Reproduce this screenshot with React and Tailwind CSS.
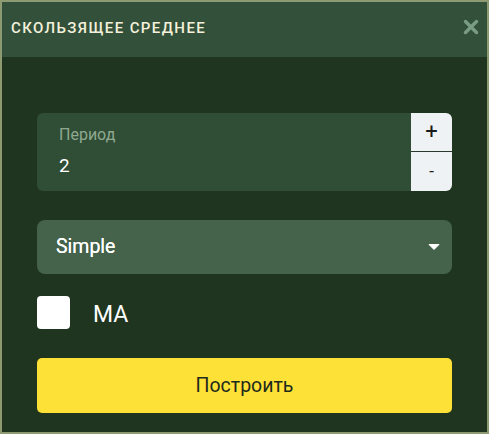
export default function App() {
  return (
    <div className="w-[489px] h-[434px] border-[2px] border-[#8d9a72] bg-[#1f3520] flex flex-col" style={{ fontFamily: "Roboto, 'Liberation Sans', sans-serif" }}>
      <div className="h-[55px] shrink-0 bg-[#33503a] flex items-center justify-between pl-[9px] pr-[8px]">
        <span className="text-[15px] font-medium tracking-[1.4px] text-[#f3f1dc] mt-[-2px]">СКОЛЬЗЯЩЕЕ СРЕДНЕЕ</span>
        <svg width="16" height="16" viewBox="0 0 16 16" className="mt-[-5px]">
          <path d="M2.5 2.5 L13.5 13.5 M13.5 2.5 L2.5 13.5" stroke="#7b9c84" strokeWidth="3.4" strokeLinecap="round" />
        </svg>
      </div>
      <div className="flex flex-col px-[35px] pt-[56px]">
        <div className="flex h-[78px]">
          <div className="flex-1 bg-[#304e35] rounded-l-[6px] flex flex-col pl-[22px] pt-[12px]">
            <span className="text-[16px] text-[#8fa890] leading-[20px]">Период</span>
            <span className="text-[19px] text-white leading-[22px] mt-[10px]">2</span>
          </div>
          <div className="w-[41px] flex flex-col">
            <button className="h-[39px] bg-[#eef2f4] rounded-tr-[6px] text-[22px] leading-none text-[#1a1a1a] flex items-center justify-center border-b border-[#2a3a2c]">+</button>
            <button className="flex-1 bg-[#eef2f4] rounded-br-[6px] text-[17px] leading-none text-[#1a1a1a] flex items-center justify-center">-</button>
          </div>
        </div>
        <div className="mt-[29px] h-[54px] bg-[#44634a] rounded-[8px] flex items-center justify-between pl-[19px] pr-[12px]">
          <span className="text-[19.5px] text-white [text-shadow:0_0_0.4px_#fff]">Simple</span>
          <svg width="12" height="8" viewBox="0 0 12 8">
            <path d="M1 1.5 L11 1.5 L6 6.5 Z" fill="#ffffff" stroke="#ffffff" strokeWidth="1" strokeLinejoin="round" />
          </svg>
        </div>
        <div className="mt-[22px] h-[33px] flex items-center">
          <div className="w-[33px] h-[33px] bg-white rounded-[4px]"></div>
          <span className="ml-[23px] mt-[5px] leading-[24px] text-[23px] text-white">MA</span>
        </div>
        <button className="mt-[29px] h-[55px] bg-[#fde137] rounded-[5px] text-[19.5px] text-[#1c2a1c] flex items-center justify-center">Построить</button>
      </div>
    </div>
  );
}
